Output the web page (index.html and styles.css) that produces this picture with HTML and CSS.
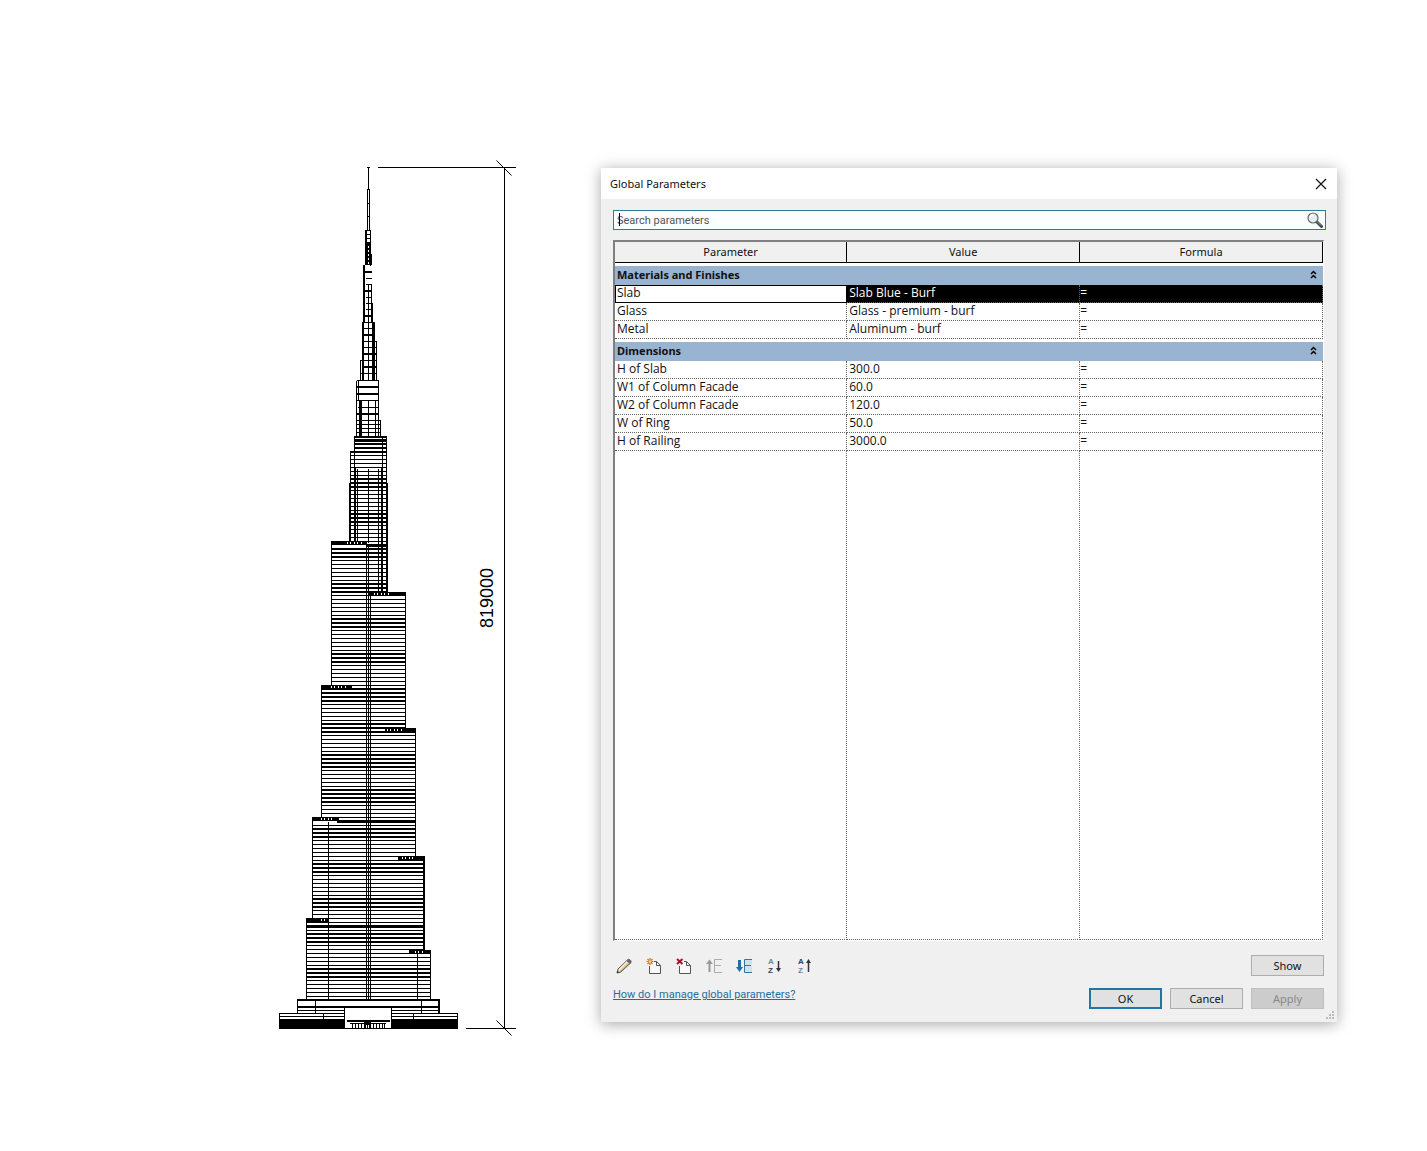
FILE: index.html
```html
<!DOCTYPE html>
<html lang="en">
  <head>
    <meta charset="UTF-8" />
    <meta name="viewport" content="width=device-width, initial-scale=1.0" />
    <title>Global Parameters</title>
    <link rel="stylesheet" href="styles.css">
  </head>
  <body>
    <main class="workspace">
      <!-- tower elevation -->
      <svg class="elevation" viewBox="270 155 260 890" role="img" aria-label="Tower elevation with height dimension">
        <defs>
          <!-- 35 units = 9 floors, the first three are mechanical -->
          <pattern id="floors" x="0" y="618" width="10" height="35" patternUnits="userSpaceOnUse">
            <path d="M0 0h10v2H0zM0 4h10v2H0zM0 8h10v2H0zM0 12h10v1H0zM0 16h10v1H0zM0 20h10v1H0zM0 24h10v1H0zM0 28h10v1H0zM0 32h10v1H0z" />
          </pattern>
        </defs>

        <!-- floor slabs -->
        <g fill="url(#floors)">
          <path d="M354 443h33v8h-33zM350 451h37v32h-37zM349 483h39v59h-39z" />
          <path d="M331 546h57v47h-57zM331 593h75v93h-75z" />
          <path d="M321 686h85v43h-85zM321 729h95v89h-95z" />
          <path d="M312 822h104v35h-104zM312 857h113v66h-113z" />
          <path d="M306 923h119v28h-119zM306 951h125v48h-125z" />
        </g>

        <!-- solid parts -->
        <g>
          <path d="M365 230h2v35h-2zM367 243h4v22h-4zM369 254h3v11h-3z" />
          <path d="M363 265h2v57h-2zM371 284h1v38h-1zM372 303h1v19h-1zM362 322h2v58h-2zM372 322h3v58h-3z" />
          <path d="M365 271h7v2h-7zM365 290h7v2h-7zM364 315h8v2h-8zM363 334h11v2h-11zM363 353h13v2h-13zM362 366h15v2h-15z" />
          <path d="M356 386h23v2h-23zM356 393h23v2h-23zM357 413h22v2h-22zM359 400h2v36h-2z" />
          <path d="M354 436h33v2h-33zM354 439h33v3h-33z" />
          <path d="M354 468h2v74h-2zM381 468h2v125h-2zM349 483h2v59h-2zM386 483h2v110h-2z" />
          <path d="M331 541h36v4h-36zM366 544h21v3h-21zM368 592h38v4h-38z" />
          <path d="M321 685h31v4h-31zM321 700h85v2h-85zM385 728h31v4h-31zM321 754h95v2h-95zM321 789h95v2h-95z" />
          <path d="M312 817h27v4h-27zM337 820h79v3h-79zM398 856h27v4h-27zM423 857h2v94h-2z" />
          <path d="M306 918h23v5h-23zM328 918h96v1h-96zM328 922h96v1h-96zM306 925h119v3h-119zM409 950h22v4h-22z" />
          <path d="M297 999h143v2h-143zM297 1006h143v2h-143zM438 999h2v15h-2zM279 1019h66v10h-66zM391 1019h67v10h-67z" />
        </g>

        <!-- edges and mullions -->
        <g class="thin" transform="translate(.5 .5)">
          <path d="M366 167h3M368 167v22M367 230v-41h2v41M367 203h2M367 216h2" />
          <path d="M365 230h5v35M366 234h4M366 238h4M366 242h4" />
          <path d="M365 278h6M365 284h6M365 297h6M365 303h7M365 309h7M368 284v38" />
          <path d="M362 322h12M363 328h11M363 341h13v39M363 347h13M360 380v-20h16M360 373h16M368 322v58" />
          <path d="M356 380h22v56M356 380v56M358 380v20M356 400h22M357 407h21M356 420h24v16M356 424h24M356 428h24M356 432h24M361 400v36M368 400v36M375 400v36" />
          <path d="M354 436v15M386 436v47M382 436v32M350 483v-32h4M354 451v17M357 468v74M368 468v74M378 468v124M386 541v51" />
          <path d="M331 541v145M366 543v456M368 543v456M370 594v405M405 592v137" />
          <path d="M321 685v133M415 728v129M312 817v101M328 821v178M306 918v81M430 950v49M417 953v46" />
          <path d="M297 999v14M315 999v14M421 999v14M297 1010h142M279 1013h178v15h-178zM279 1016h178M323 1013v6M413 1013v6" />
        </g>

        <!-- terrace railings -->
        <g class="railing">
          <path d="M347 543h17M374 594h15M331 687h16M387 730h17M321 819h14M402 858h13M321 920h6M415 952h9" />
          <path d="M368 246v18" stroke-dasharray="2 2" stroke-width="1" />
        </g>

        <!-- entrance -->
        <path d="M345 1008h46v20h-46z" fill="#fff" />
        <path d="M347 1020h43v2h-43zM350 1023h36v1h-36zM364 1022h7v6h-7z" />
        <path class="thin" d="M344.500 1007v21M391.500 1007v21M352.500 1024v4M355.500 1024v4M358.500 1024v4M361.500 1024v4M373.500 1024v4M376.500 1024v4M379.500 1024v4M382.500 1024v4M384.500 1024v4" />
        <path d="M366 1025h1v3h-1zM368 1025h1v3h-1z" fill="#fff" />

        <!-- dimension -->
        <g class="thin" transform="translate(.5 .5)">
          <path d="M377 167h138M504 167v861M465 1028h50" />
          <path class="tick" d="M496 160l15 15M496 1020l15 15" />
        </g>
        <text class="dimension" transform="translate(493 628) rotate(-90)">819000</text>
      </svg>

      <!-- dialog -->
      <section class="dialog" role="dialog" aria-labelledby="dialog_title">
        <header class="title-bar">
          <h1 id="dialog_title">Global Parameters</h1>
          <button type="button" class="close" aria-label="Close">
            <svg width="12" height="12" viewBox="0 0 12 12"><path d="M1 1l10 10M11 1L1 11" fill="none" stroke="#111" stroke-width="1.200" /></svg>
          </button>
        </header>

        <label class="search" for="search">
          <input type="text" name="search" id="search" placeholder="Search parameters" aria-label="Search parameters" />
          <svg width="16" height="16" viewBox="0 0 16 16">
            <path d="M10 10l4.500 4.500" stroke="#444" stroke-width="3" stroke-linecap="round" />
            <path d="M10.500 10l3.500 3.500" stroke="#999" stroke-width="1" />
            <circle cx="6" cy="6" r="5" fill="#e3f0f2" stroke="#666" stroke-width="1.200" />
            <path d="M3 6a3 3 0 0 1 3-3" fill="none" stroke="#fff" stroke-width="1.200" />
          </svg>
        </label>

        <div class="grid">
          <table>
            <colgroup>
              <col class="col-parameter" />
              <col class="col-value" />
              <col />
            </colgroup>
            <thead>
              <tr><th>Parameter</th><th>Value</th><th>Formula</th></tr>
            </thead>
            <tbody>
              <tr class="group">
                <th colspan="3"><div>Materials and Finishes
                  <button type="button" aria-label="Collapse Materials and Finishes"><svg width="7" height="9" viewBox="0 0 7 9"><path d="M1 4l2.500-2.500L6 4M1 8l2.500-2.500L6 8" /></svg></button></div></th>
              </tr>
              <tr class="selected"><td>Slab</td><td>Slab Blue - Burf</td><td>=</td></tr>
              <tr><td>Glass</td><td>Glass - premium - burf</td><td>=</td></tr>
              <tr><td>Metal</td><td>Aluminum - burf</td><td>=</td></tr>
            </tbody>
            <tbody>
              <tr class="group">
                <th colspan="3"><div>Dimensions
                  <button type="button" aria-label="Collapse Dimensions"><svg width="7" height="9" viewBox="0 0 7 9"><path d="M1 4l2.500-2.500L6 4M1 8l2.500-2.500L6 8" /></svg></button></div></th>
              </tr>
              <tr><td>H of Slab</td><td>300.0</td><td>=</td></tr>
              <tr><td>W1 of Column Facade</td><td>60.0</td><td>=</td></tr>
              <tr><td>W2 of Column Facade</td><td>120.0</td><td>=</td></tr>
              <tr><td>W of Ring</td><td>50.0</td><td>=</td></tr>
              <tr><td>H of Railing</td><td>3000.0</td><td>=</td></tr>
              <tr class="empty"><td></td><td></td><td></td></tr>
            </tbody>
          </table>
        </div>

        <footer class="footer">
          <div class="footer-row">
            <div class="toolbar">
              <button type="button" aria-label="Edit parameter">
                <svg viewBox="0 0 16 16">
                  <path d="M1 15l1-4L12 1.500c1-1 4 1.500 3 3L5 14z" fill="#d9c8a0" stroke="#555" />
                  <path d="M3 12l9-9" stroke="#fff3d0" stroke-width="1.500" />
                  <path d="M5 13.500L14 5" stroke="#8a7350" />
                  <path d="M11.500 2c1-1.500 4.500 1 3.500 3l-1 1-3.500-3z" fill="#666" />
                  <path d="M1 15l.5-2 1.500 1.500z" fill="#222" />
                </svg>
              </button>
              <button type="button" aria-label="New parameter">
                <svg viewBox="0 0 16 16">
                  <path d="M3.500 8v7.500h11v-8l-4-4H8" fill="#f8f8f8" stroke="#555" />
                  <path d="M10.500 3.500v4h4" fill="none" stroke="#555" />
                  <path d="M4 0v7M.5 3.500h7M1.500 1l5 5M6.500 1l-5 5" stroke="#cf7a20" stroke-width="1.200" />
                  <circle cx="4" cy="3.500" r="1.300" fill="#ffe38a" />
                </svg>
              </button>
              <button type="button" aria-label="Delete parameter">
                <svg viewBox="0 0 16 16">
                  <path d="M3.500 8v7.500h11v-8l-4-4H8" fill="#f8f8f8" stroke="#555" />
                  <path d="M10.500 3.500v4h4" fill="none" stroke="#555" />
                  <path d="M1 1l5.500 5M6.500 1L1 6" stroke="#a5182b" stroke-width="2" />
                </svg>
              </button>
              <button type="button" aria-label="Move up" disabled>
                <svg viewBox="0 0 16 16">
                  <path d="M3.500 14V4" stroke="#999" stroke-width="2" />
                  <path d="M0 6l3.500-4.500L7 6z" fill="#999" />
                  <path d="M16 1.500H8.500v13H16M8.500 7.500H15" fill="none" stroke="#aaa" />
                </svg>
              </button>
              <button type="button" aria-label="Move down">
                <svg viewBox="0 0 16 16">
                  <path d="M9 2h7v5H9zM9 8h7v6H9z" fill="#cfe3ef" />
                  <path d="M3.500 2v8" stroke="#1f6fa0" stroke-width="3" />
                  <path d="M0 9h7l-3.500 5z" fill="#1f6fa0" />
                  <path d="M16 1.500H8.500v13H16M8.500 7.500H15" fill="none" stroke="#2a78a8" />
                </svg>
              </button>
              <button type="button" aria-label="Sort ascending">
                <svg class="sort" viewBox="0 0 16 20">
                  <text class="letter light" x="2" y="8">A</text>
                  <text class="letter" x="2" y="17">Z</text>
                  <path d="M12.500 5v9" stroke="#334" stroke-width="1.500" />
                  <path d="M10 12h5l-2.500 4z" fill="#334" />
                </svg>
              </button>
              <button type="button" aria-label="Sort descending">
                <svg class="sort" viewBox="0 0 16 20">
                  <text class="letter" x="2" y="8">A</text>
                  <text class="letter light" x="2" y="17">Z</text>
                  <path d="M12.500 6v10" stroke="#334" stroke-width="1.500" />
                  <path d="M10 7h5l-2.500-4z" fill="#334" />
                </svg>
              </button>
            </div>
            <button type="button" class="btn">Show</button>
          </div>
          <div class="footer-row">
            <a href="#help">How do I manage global parameters?</a>
            <div class="actions">
              <button type="submit" class="btn primary">OK</button>
              <button type="button" class="btn">Cancel</button>
              <button type="button" class="btn" disabled>Apply</button>
            </div>
          </div>
        </footer>
        <svg class="grip" width="8" height="8" viewBox="0 0 8 8"><path d="M6 0h2v2H6zM3 3h2v2H3zM6 3h2v2H6zM0 6h2v2H0zM3 6h2v2H3zM6 6h2v2H6z" fill="#bbb" /></svg>
      </section>
    </main>
  </body>
</html>
```

FILE: styles.css
```css
* {
  box-sizing: border-box;
}

body {
  margin: 0;
  background: #fff;
  color: #111;
  font: 11px/16px "Noto Sans", sans-serif;
}

button,
input {
  font: inherit;
  color: inherit;
}

.workspace {
  display: flex;
  align-items: flex-start;
  gap: 71px;
  padding: 155px 90px 100px 270px;
}

/* elevation */
.elevation {
  flex: none;
  width: 260px;
  shape-rendering: crispEdges;
}

.thin {
  fill: none;
  stroke: #000;
}

.tick {
  shape-rendering: auto;
}

.railing {
  fill: none;
  stroke: #fff;
  stroke-width: 2;
  stroke-dasharray: 1 2 1 3;
}

.dimension {
  font: 18px "Liberation Sans", sans-serif;
}

/* dialog */
.dialog {
  position: relative;
  flex: 1;
  min-width: 0;
  margin-top: 13px;
  background: #f0f0f0;
  box-shadow: 0 2px 14px rgba(0, 0, 0, 0.35);
}

.title-bar {
  display: flex;
  align-items: center;
  justify-content: space-between;
  height: 31px;
  padding: 0 10px 0 9px;
  background: #fff;
}

.title-bar h1 {
  margin: 0;
  font-size: 11px;
  font-weight: 400;
}

.close {
  display: flex;
  padding: 0;
  border: 0;
  background: none;
}

.search {
  position: relative;
  display: flex;
  align-items: center;
  height: 20px;
  margin: 11px 11px 10px 12px;
  padding-right: 2px;
  border: 1px solid #2a7f96;
  background: #fbffff;
}

.search::before {
  content: "";
  position: absolute;
  left: 5px;
  top: 2px;
  width: 1px;
  height: 13px;
  background: #000;
}

.search input {
  flex: 1;
  min-width: 0;
  height: 18px;
  padding: 0 3px;
  border: 0;
  outline: 0;
  background: none;
  font-family: Roboto, sans-serif;
}

.search input::placeholder {
  color: #555;
}

/* parameter table */
.grid {
  margin: 0 13px 0 12px;
  border: solid;
  border-width: 2px 1px 1px 2px;
  border-color: #808080 #fff #fff #808080;
  background: #fff;
}

table {
  width: 100%;
  table-layout: fixed;
  border-spacing: 0;
}

.col-parameter {
  width: 32.8%;
}

.col-value {
  width: 32.9%;
}

th,
td {
  height: 18px;
  padding: 0 2px;
  line-height: 16px;
  text-align: left;
  border-right: 1px dotted #666;
  border-bottom: 1px dotted #666;
}

td {
  padding-bottom: 2px;
  font-family: "Open Sans", sans-serif;
  font-size: 12px;
  line-height: 15px;
}

td:nth-child(3) {
  padding-left: 0;
}

thead th {
  height: 21px;
  font-weight: 400;
  text-align: center;
  background: #f0f0f0;
  border-right: 1px solid #000;
  border-bottom: 1px solid #000;
}

.group th {
  height: 22px;
  padding: 0;
  border: 0;
  border-top: 3px solid #fff;
  background: #99b4d1;
}

.group div {
  display: flex;
  align-items: center;
  justify-content: space-between;
  padding: 0 6px 2px 2px;
}

.group button {
  display: flex;
  padding: 0;
  border: 0;
  background: none;
}

.group path {
  fill: none;
  stroke: #000;
  stroke-width: 1.5;
}

.selected td {
  color: #fff;
  background: #000;
}

.selected td:first-child {
  color: #111;
  background: #fff;
  outline: 1px solid #000;
  outline-offset: -1px;
}

.empty td {
  height: 489px;
}

/* footer */
.footer {
  display: flex;
  flex-direction: column;
  gap: 12px;
  padding: 14px 13px 13px 12px;
}

.footer-row {
  display: flex;
  align-items: flex-start;
  justify-content: space-between;
}

.toolbar {
  display: flex;
  align-items: center;
  gap: 14px;
  padding: 1px 0 0 3px;
}

.toolbar button {
  display: flex;
  padding: 0;
  border: 0;
  background: none;
}

.toolbar svg {
  width: 16px;
  height: 16px;
  fill: none;
}

.toolbar .sort {
  height: 20px;
}

.toolbar .letter {
  font: bold 8px "Liberation Sans", sans-serif;
  fill: #2f3f5c;
}

.toolbar .light {
  fill: #6f83a3;
}

.footer a {
  color: #1f6f9f;
  font-family: Roboto, sans-serif;
  line-height: 14px;
}

.actions {
  display: flex;
  gap: 8px;
}

.btn {
  width: 73px;
  height: 21px;
  padding: 0;
  line-height: 15px;
  border: 1px solid #adadad;
  background: #e1e1e1;
}

.btn.primary {
  border: 2px solid #1c78a8;
}

.btn:disabled {
  color: #888;
  background: #ccc;
  border-color: #bfbfbf;
}

.grip {
  position: absolute;
  right: 3px;
  bottom: 3px;
}
```
